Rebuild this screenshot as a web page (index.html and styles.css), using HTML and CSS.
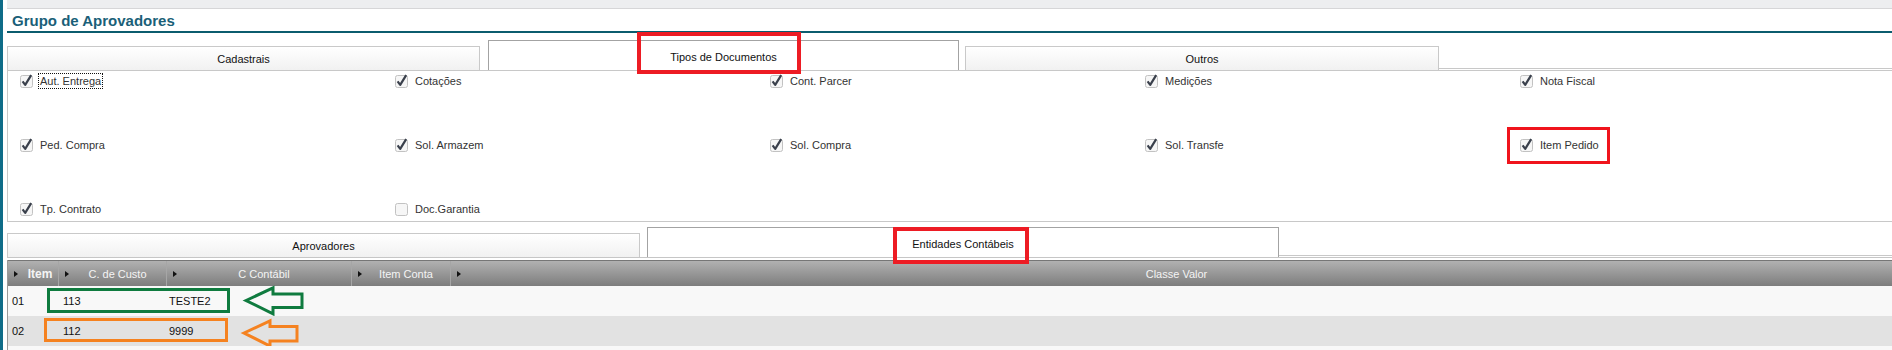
FILE: index.html
```html
<!DOCTYPE html>
<html lang="pt">
<head>
<meta charset="utf-8">
<title>Grupo de Aprovadores</title>
<link rel="stylesheet" href="styles.css">
</head>
<body>
<div class="app">
  <div class="edge"></div>
  <div class="main">
    <div class="topbar"></div>
    <h1 class="title">Grupo de Aprovadores</h1>

    <div class="tabs tabs-top">
      <div class="tab small t-cad">Cadastrais</div>
      <div class="tab active t-tipos">Tipos de Documentos<span class="mark mark-tipos"></span></div>
      <div class="tab small t-outros">Outros</div>
      <div class="tabs-fill"></div>
    </div>

    <div class="panel">
      <label class="chk"><svg class="cb" viewBox="0 0 13 13" width="13" height="13"><rect x="0.5" y="0.5" width="12" height="12" rx="2" class="box"/><path d="M2.6 6.4 L5.2 9.8 L11.2 0.2" class="tick"/></svg><span class="lbl focus">Aut. Entrega</span></label>
      <label class="chk"><svg class="cb" viewBox="0 0 13 13" width="13" height="13"><rect x="0.5" y="0.5" width="12" height="12" rx="2" class="box"/><path d="M2.6 6.4 L5.2 9.8 L11.2 0.2" class="tick"/></svg><span class="lbl">Cotações</span></label>
      <label class="chk"><svg class="cb" viewBox="0 0 13 13" width="13" height="13"><rect x="0.5" y="0.5" width="12" height="12" rx="2" class="box"/><path d="M2.6 6.4 L5.2 9.8 L11.2 0.2" class="tick"/></svg><span class="lbl">Cont. Parcer</span></label>
      <label class="chk"><svg class="cb" viewBox="0 0 13 13" width="13" height="13"><rect x="0.5" y="0.5" width="12" height="12" rx="2" class="box"/><path d="M2.6 6.4 L5.2 9.8 L11.2 0.2" class="tick"/></svg><span class="lbl">Medições</span></label>
      <label class="chk"><svg class="cb" viewBox="0 0 13 13" width="13" height="13"><rect x="0.5" y="0.5" width="12" height="12" rx="2" class="box"/><path d="M2.6 6.4 L5.2 9.8 L11.2 0.2" class="tick"/></svg><span class="lbl">Nota Fiscal</span></label>

      <label class="chk"><svg class="cb" viewBox="0 0 13 13" width="13" height="13"><rect x="0.5" y="0.5" width="12" height="12" rx="2" class="box"/><path d="M2.6 6.4 L5.2 9.8 L11.2 0.2" class="tick"/></svg><span class="lbl">Ped. Compra</span></label>
      <label class="chk"><svg class="cb" viewBox="0 0 13 13" width="13" height="13"><rect x="0.5" y="0.5" width="12" height="12" rx="2" class="box"/><path d="M2.6 6.4 L5.2 9.8 L11.2 0.2" class="tick"/></svg><span class="lbl">Sol. Armazem</span></label>
      <label class="chk"><svg class="cb" viewBox="0 0 13 13" width="13" height="13"><rect x="0.5" y="0.5" width="12" height="12" rx="2" class="box"/><path d="M2.6 6.4 L5.2 9.8 L11.2 0.2" class="tick"/></svg><span class="lbl">Sol. Compra</span></label>
      <label class="chk"><svg class="cb" viewBox="0 0 13 13" width="13" height="13"><rect x="0.5" y="0.5" width="12" height="12" rx="2" class="box"/><path d="M2.6 6.4 L5.2 9.8 L11.2 0.2" class="tick"/></svg><span class="lbl">Sol. Transfe</span></label>
      <label class="chk"><svg class="cb" viewBox="0 0 13 13" width="13" height="13"><rect x="0.5" y="0.5" width="12" height="12" rx="2" class="box"/><path d="M2.6 6.4 L5.2 9.8 L11.2 0.2" class="tick"/></svg><span class="lbl">Item Pedido</span><span class="mark mark-item"></span></label>

      <label class="chk"><svg class="cb" viewBox="0 0 13 13" width="13" height="13"><rect x="0.5" y="0.5" width="12" height="12" rx="2" class="box"/><path d="M2.6 6.4 L5.2 9.8 L11.2 0.2" class="tick"/></svg><span class="lbl">Tp. Contrato</span></label>
      <label class="chk"><svg class="cb" viewBox="0 0 13 13" width="13" height="13"><rect x="0.5" y="0.5" width="12" height="12" rx="2" class="box"/></svg><span class="lbl">Doc.Garantia</span></label>
    </div>

    <div class="tabs tabs-bottom">
      <div class="tab small t-aprov">Aprovadores</div>
      <div class="tab active t-ent">Entidades Contábeis<span class="mark mark-ent"></span></div>
      <div class="tabs-fill"></div>
    </div>

    <div class="grid">
      <div class="grid-head">
        <div class="hcell c1"><i class="tri"></i><span class="bold">Item</span></div>
        <div class="hcell c2"><i class="tri"></i><span>C. de Custo</span></div>
        <div class="hcell c3"><i class="tri"></i><span>C Contábil</span></div>
        <div class="hcell c4"><i class="tri"></i><span>Item Conta</span></div>
        <div class="hcell c5"><i class="tri"></i><span>Classe Valor</span></div>
      </div>
      <div class="row odd">
        <div class="cell c1">01</div>
        <div class="cell c2">113</div>
        <div class="cell c3">TESTE2</div>
        <div class="cell c4"></div>
        <div class="cell c5"></div>
        <span class="hl hl-green"></span>
        <svg class="arrow arrow-green" width="60" height="30" viewBox="0 0 60 30"><polygon points="2,14.5 29,1.8 29,8 58,8 58,21.5 29,21.5 29,27.8"/></svg>
      </div>
      <div class="row even">
        <div class="cell c1">02</div>
        <div class="cell c2">112</div>
        <div class="cell c3">9999</div>
        <div class="cell c4"></div>
        <div class="cell c5"></div>
        <span class="hl hl-orange"></span>
        <svg class="arrow arrow-orange" width="57" height="29" viewBox="0 0 57 29"><polygon points="2,14 28,1.8 28,7.5 55,7.5 55,22 28,22 28,27"/></svg>
      </div>
      <div class="row odd tail"></div>
    </div>
  </div>
</div>
</body>
</html>
```

FILE: styles.css
```css
* { box-sizing: border-box; }

body {
  margin: 0;
  background: #fff;
  font-family: "Liberation Sans", Arial, sans-serif;
  font-size: 11px;
  color: #222;
}

.app {
  display: flex;
  height: 350px;
  overflow: hidden;
}

.edge {
  flex: none;
  width: 3px;
  background: #0f6c88;
}

.main {
  flex: 1;
  min-width: 0;
  padding-left: 4px;
}

.topbar {
  height: 9px;
  background: #edeef0;
  border-bottom: 1px solid #d6d6d8;
}

.title {
  margin: 0;
  height: 24px;
  padding: 1px 0 0 5px;
  line-height: 21px;
  font-size: 15px;
  font-weight: bold;
  color: #1a5f78;
  border-bottom: 2px solid #0b5c6e;
}

/* ---------- tabs ---------- */
.tabs {
  display: flex;
  align-items: flex-end;
}

.tabs-top { height: 37px; }

.tabs-bottom {
  height: 36px;
  border-bottom: 1px solid #c6c6c6;
}

.tab {
  position: relative;
  flex: none;
  display: flex;
  align-items: center;
  justify-content: center;
  border: 1px solid #c9c9c9;
  border-bottom: none;
  background: linear-gradient(#ffffff, #f1f1f1);
  color: #111;
}

.tab.small { height: 24px; padding-top: 1px; }

.tab.active {
  height: 30px;
  padding-top: 3px;
  background: #fff;
  border-color: #a3a3a3;
}

.t-cad { width: 473px; margin-right: 8px; }
.t-tipos { width: 471px; margin-right: 6px; }
.t-outros { width: 474px; }
.t-aprov { width: 633px; margin-right: 7px; }
.t-ent { width: 632px; }

.tabs-fill {
  flex: 1;
  margin-bottom: 1px;
  border-bottom: 1px solid #c8c8c8;
}

/* red annotation boxes */
.mark {
  position: absolute;
  border: 4px solid #ed1c24;
}

.mark-tipos { left: 148px; top: -9px; width: 164px; height: 42px; }
.mark-ent { left: 245px; top: -1px; width: 136px; height: 37px; }
.mark-item { left: -13px; top: -10px; width: 103px; height: 37px; border-width: 3px; border-color: #f0141c; }

/* ---------- checkbox panel ---------- */
.panel {
  height: 152px;
  padding: 2px 0 0 12px;
  border: 1px solid #c8c8c8;
  border-right: none;
  display: grid;
  grid-template-columns: repeat(4, 375px) 1fr;
  grid-template-rows: repeat(3, 16px);
  row-gap: 48px;
}

.chk {
  position: relative;
  display: flex;
  align-items: center;
  gap: 7px;
  color: #333;
}

.cb {
  flex: none;
  overflow: visible;
}

.cb .box {
  fill: #f6f6f6;
  stroke: #c2c2c2;
}

.cb .tick {
  fill: none;
  stroke: #3a404c;
  stroke-width: 2.2;
  stroke-linejoin: round;
}

.lbl.focus {
  outline: 1px dotted #111;
  outline-offset: 1px;
}

/* ---------- grid ---------- */
.grid {
  margin-top: 2px;
  border-left: 1px solid #9a9a9a;
}

.grid-head {
  display: flex;
  height: 26px;
  border-top: 1px solid #767676;
  background: linear-gradient(#b1b1b1, #7d7d7d);
  color: #f4f4f4;
}

.hcell {
  display: flex;
  align-items: center;
  padding-left: 6px;
  border-right: 1px solid #a6a6a6;
}

.hcell span { flex: 1; text-align: center; }
.hcell .bold { font-weight: bold; font-size: 12px; padding-left: 4px; }

.tri {
  width: 0;
  height: 0;
  border-left: 4px solid #111;
  border-top: 3.5px solid transparent;
  border-bottom: 3.5px solid transparent;
}

.c1 { width: 51px; flex: none; }
.c2 { width: 108px; flex: none; }
.c3 { width: 185px; flex: none; }
.c4 { width: 99px; flex: none; }
.c5 { flex: 1; border-right: none; }

.row {
  position: relative;
  display: flex;
  align-items: center;
  height: 30px;
  color: #111;
}

.row.odd { background: #f8f8f8; }
.row.even { background: #e2e2e2; }
.row.tail { height: 6px; }

.cell { padding-left: 4px; }
.cell.c3 { padding-left: 2px; }

.hl {
  position: absolute;
  border: 3px solid;
}

.hl-green { left: 39px; top: 2px; width: 183px; height: 25px; border-color: #0f7b3f; }
.hl-orange { left: 36px; top: 2px; width: 184px; height: 24px; border-color: #f58220; }

.arrow {
  position: absolute;
  overflow: visible;
}

.arrow polygon {
  fill: none;
  stroke-width: 3;
  stroke-linejoin: miter;
}

.arrow-green { left: 236px; top: 0; }
.arrow-green polygon { stroke: #0f7b3f; }
.arrow-orange { left: 234px; top: 3px; }
.arrow-orange polygon { stroke: #f58220; }
```
